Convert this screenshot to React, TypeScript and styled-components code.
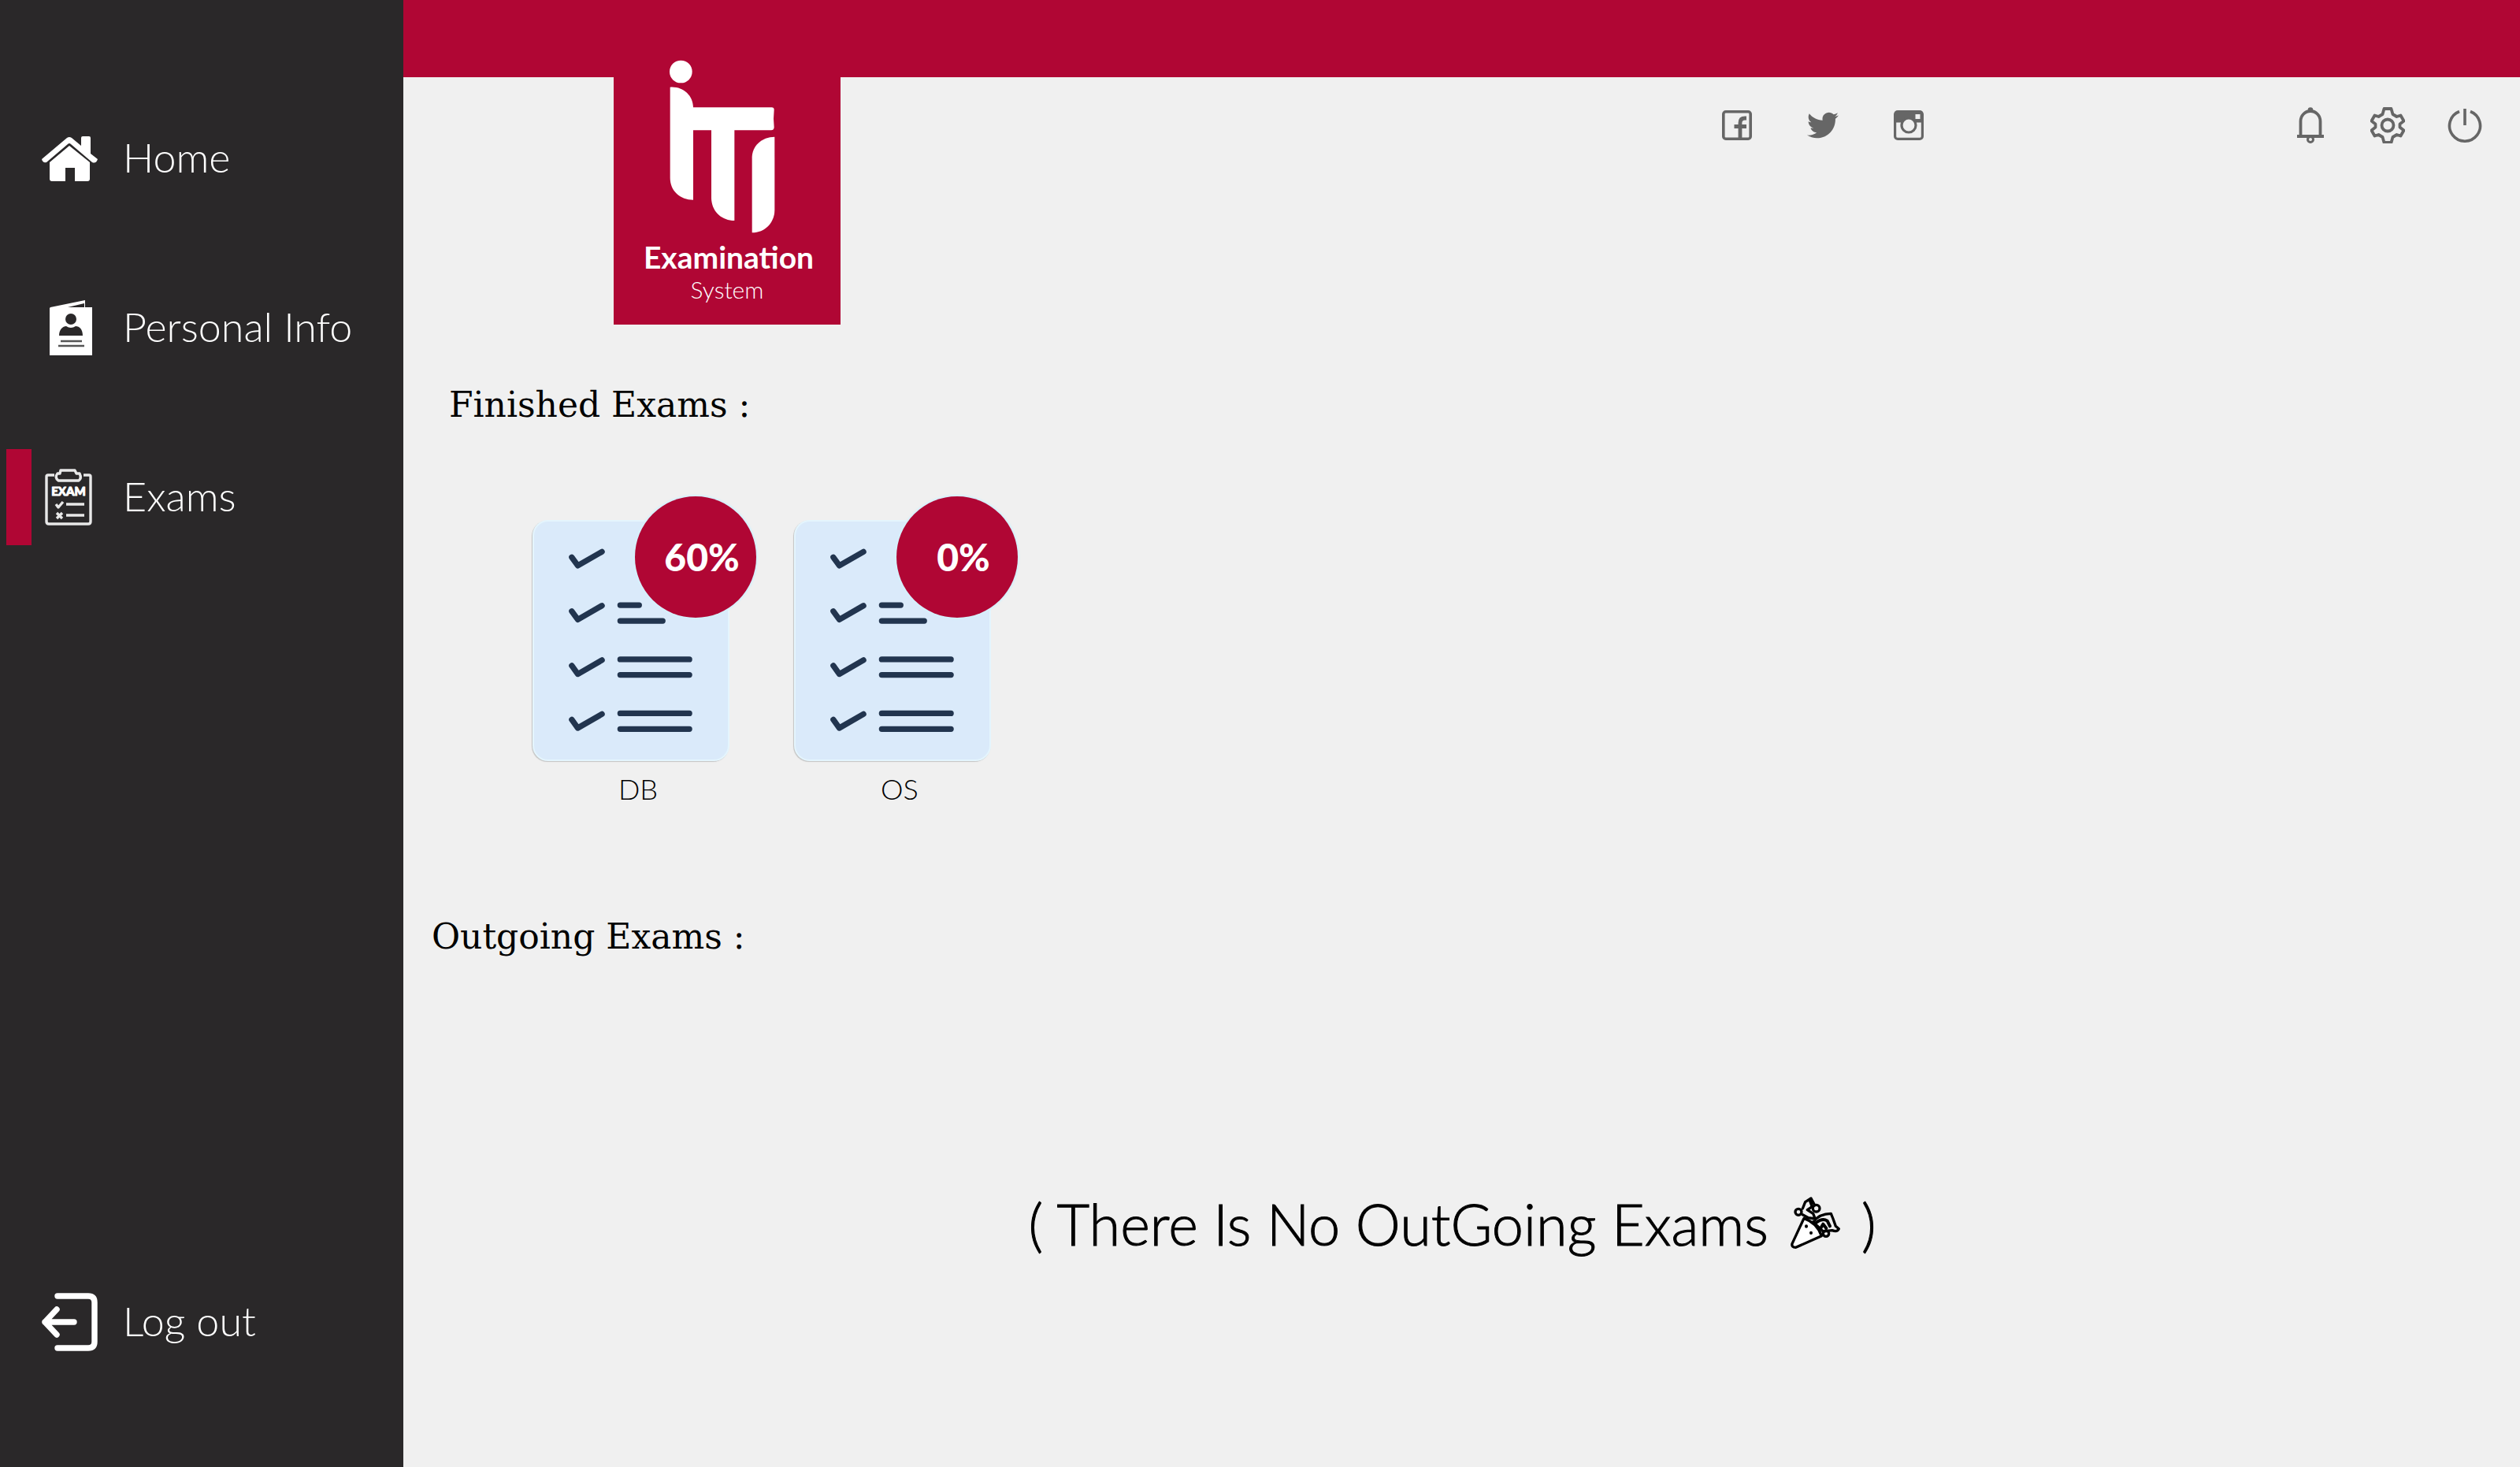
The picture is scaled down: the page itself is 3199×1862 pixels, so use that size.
import React from 'react';
import styled, { createGlobalStyle } from 'styled-components';
import { FaTwitter } from 'react-icons/fa';

const crimson = '#b00634';
const charcoal = '#2a2829';
const paper = '#f0f0f0';
const iconGrey = '#666666';

const GlobalStyle = createGlobalStyle`
  *, *::before, *::after { box-sizing: border-box; }
  body {
    margin: 0;
    background: ${paper};
    color: #000;
    font-family: 'Century Gothic', Lato, sans-serif;
    font-weight: 300;
  }
`;

const Page = styled.div`
  display: flex;
  min-height: 100vh;
`;

const Sidebar = styled.nav`
  display: flex;
  flex-direction: column;
  flex: 0 0 512px;
  padding: 140px 0 123px;
  background: ${charcoal};
`;

const NavList = styled.ul`
  display: flex;
  flex: 1;
  flex-direction: column;
  gap: 93px;
  margin: 0;
  padding: 0;
  list-style: none;
`;

const NavItem = styled.li<{ $last?: boolean }>`
  margin-top: ${(p) => (p.$last ? 'auto' : '0')};
`;

const NavLink = styled.a<{ $active?: boolean }>`
  display: flex;
  align-items: center;
  height: 122px;
  padding-left: 8px;
  color: #fff;
  font-size: 52px;
  line-height: 60px;
  text-decoration: none;
  white-space: nowrap;

  &::before {
    content: '';
    width: 32px;
    height: 100%;
    margin-right: 12px;
    background: ${(p) => (p.$active ? crimson : 'transparent')};
  }

  svg {
    width: 72px;
    height: 76px;
    margin-right: 32px;
  }
`;

const NavText = styled.span`
  padding-bottom: 4px;
`;

const Main = styled.main`
  flex: 1;
  min-width: 0;
`;

const TopBar = styled.div`
  height: 98px;
  background: ${crimson};
`;

const Header = styled.header`
  display: flex;
  align-items: flex-start;
  padding: 0 40px 0 267px;
`;

const Brand = styled.div`
  display: flex;
  flex-direction: column;
  align-items: center;
  width: 288px;
  margin-top: -24px;
  padding-bottom: 26px;
  background: ${crimson};
  color: #fff;

  svg {
    width: 136px;
    height: 224px;
    margin-right: 12px;
  }
`;

const BrandName = styled.strong`
  margin-top: 6px;
  padding-left: 4px;
  font-size: 39px;
  font-weight: 700;
  line-height: 44px;
`;

const BrandSub = styled.span`
  font-size: 30px;
  line-height: 38px;
`;

const IconGroup = styled.div<{ $gap: number; $push?: boolean }>`
  display: flex;
  gap: ${(p) => p.$gap}px;
  margin-top: 31px;
  margin-left: ${(p) => (p.$push ? 'auto' : '0')};

  & + & { margin-left: 450px; }
`;

const IconLink = styled.a`
  display: grid;
  place-items: center;
  width: 60px;
  height: 60px;
  color: ${iconGrey};

  svg { display: block; }
`;

const IconButton = styled(IconLink).attrs({ as: 'button', type: 'button' })`
  padding: 0;
  border: 0;
  background: none;
`;

const SectionTitle = styled.h2<{ $indent: number }>`
  margin: 0;
  padding-left: ${(p) => p.$indent}px;
  font-family: 'DejaVu Serif', serif;
  font-size: 44px;
  font-weight: 400;
  line-height: 60px;
`;

const Finished = styled.section`
  padding-top: 72px;
`;

const Outgoing = styled.section`
  padding-top: 136px;
`;

const ExamList = styled.ul`
  display: flex;
  flex-wrap: wrap;
  gap: 64px;
  margin: 0;
  padding: 116px 0 0 164px;
  list-style: none;
`;

const Exam = styled.li`
  position: relative;
  width: 268px;
  text-align: center;
`;

const Sheet = styled.div`
  width: 250px;
  height: 306px;
  border: 2px solid #e4f5fd;
  border-radius: 20px;
  background: #daeafa;
  box-shadow: -1px 1px 1px #c4c4c4;

  svg { display: block; width: 246px; height: 302px; }
`;

const Score = styled.strong`
  position: absolute;
  top: -30px;
  left: 130px;
  display: grid;
  place-items: center;
  width: 154px;
  height: 154px;
  padding-left: 16px;
  border-radius: 50%;
  background: ${crimson};
  box-shadow: 0 0 2px 2px #d5f0fb;
  color: #fff;
  font-size: 48px;
  font-weight: 900;
  line-height: 60px;
`;

const ExamName = styled.span`
  display: block;
  padding-top: 13px;
  font-size: 36px;
  line-height: 44px;
`;

const Empty = styled.p`
  display: flex;
  justify-content: center;
  align-items: center;
  gap: 26px;
  margin: 0;
  padding: 284px 24px 0 0;
  font-size: 72px;
  line-height: 100px;
  -webkit-text-stroke: 1px currentColor;
`;

const HomeIcon = () => (
  <svg viewBox="0 0 72 76" fill="#fff" aria-hidden="true">
    <path d="M1 39 33 12q3-2 6 0L51 22V12q0-2 2-2h8q2 0 2 2v20l9 7q-2 6-7 4L38 20q-2-2-4 0L7 43q-5 1-6-4Z" />
    <path d="M11 43 36 22 62 43v21q0 3-3 3H43V50H31v17H14q-3 0-3-3Z" />
  </svg>
);

const PersonalIcon = () => (
  <svg viewBox="0 0 72 76" aria-hidden="true">
    <path d="M12 12 56 3v9h9v61H11V13Z" fill="#fff" />
    <path d="m34 12 21-5v5Z" fill={charcoal} />
    <circle cx="38" cy="27" r="7" fill={charcoal} />
    <path d="M23 48c0-8 5-12 9-12q6 4 12 0c5 0 9 4 9 12Z" fill={charcoal} />
    <path d="M25 55h27M22 61h33" stroke="#555" strokeWidth="2.6" />
  </svg>
);

const ExamIcon = () => (
  <svg viewBox="0 0 72 76" fill="none" stroke="#e8e8e8" strokeWidth="3.4" strokeLinejoin="round" aria-hidden="true">
    <path d="M17 10H9q-2 0-2 2v57q0 3 3 3h50q3 0 3-3V12q0-2-2-2h-7" />
    <path d="M25 4h18l2 4h4q3 6-1 9H22q-5-4-1-9h3Z" />
    <path d="m19 47 3 4 6-7M20 58l7 7M27 58l-7 7M32 47h23M32 61h23" />
    <text x="35" y="36" textAnchor="middle" fill="#fff" stroke="#fff" strokeWidth="1" fontFamily="Lato, sans-serif" fontSize="15" fontWeight="900">EXAM</text>
  </svg>
);

const LogoutIcon = () => (
  <svg viewBox="0 0 72 76" fill="none" stroke="#fff" strokeWidth="7.4" strokeLinecap="round" strokeLinejoin="round" aria-hidden="true">
    <path d="M21 5h39q8 0 8 8v50q0 8-8 8H21" />
    <path d="M42 38H5M20 22 5 38l15 16" />
  </svg>
);

const LogoMark = () => (
  <svg viewBox="268 40 408 672" fill="#fff" role="img" aria-label="ITI">
    <circle cx="314" cy="91" r="43" />
    <path d="M273 150C320 146 361 180 361 227H660Q669 227 669 236L667 270 669 302Q669 314 658 314H518V658C468 658 430 622 430 570V314H361V579C312 579 273 545 273 495Z" />
    <path d="M671 339V618C671 665 634 704 585 704V418C585 374 622 339 671 339Z" />
  </svg>
);

const FacebookIcon = () => (
  <svg width="38" height="38" viewBox="0 0 38 38" fill="none" stroke="currentColor" strokeWidth="3.6">
    <rect x="1.8" y="1.8" width="34.4" height="34.4" rx="3" />
    <path d="M31 10h-2q-6 0-6 6V37M15.500 20.500H31" strokeWidth="4.800" />
  </svg>
);

const InstagramIcon = () => (
  <svg width="38" height="38" viewBox="0 0 38 38">
    <rect x="1.6" y="1.6" width="34.8" height="34.8" rx="3.5" fill="none" stroke="currentColor" strokeWidth="3.2" />
    <path fill="currentColor" d="M1 4q0-3 3-3h30q3 0 3 3v11.500H1Z" />
    <circle cx="19" cy="19" r="9" fill={paper} stroke="currentColor" strokeWidth="3.2" />
    <rect x="27.500" y="5" width="6" height="6" fill={paper} />
  </svg>
);

const BellIcon = () => (
  <svg width="36" height="46" viewBox="0 0 36 46" fill="none" stroke="currentColor" strokeWidth="3.8">
    <path d="M5.500 37V18a12.500 13 0 0 1 25 0v19M1 37h34" />
    <circle cx="18" cy="41" r="3.500" strokeWidth="3" />
    <circle cx="18" cy="3.500" r="1.800" strokeWidth="3" />
  </svg>
);

const GearIcon = () => (
  <svg width="44" height="46" viewBox="0 0 44 46" fill="none" stroke="currentColor" strokeWidth="3.8">
    <path d="M17.500 2h9l2 7 5 3 5-1.500 4 7-5 4v4l5 4-4 7-5-1.500-5 3-2 7h-9l-2-7-5-3-5 1.500-4-7 5-4v-4l-5-4 4-7 5 1.500 5-3Z" strokeLinejoin="round" />
    <circle cx="22" cy="23" r="7.500" />
  </svg>
);

const PowerIcon = () => (
  <svg width="44" height="44" viewBox="0 0 44 44" fill="none" stroke="currentColor" strokeWidth="3.6">
    <path d="M15 4.500a19.500 19.500 0 1 0 14 0M22 1v21" />
  </svg>
);

const Checklist = () => (
  <svg viewBox="114 185 740 906" fill="none" stroke="#22354f" strokeWidth="22" strokeLinecap="round" strokeLinejoin="round" aria-hidden="true">
    {[0, 206, 414, 620].map((dy) => (
      <path key={dy} d={`M258 ${320 + dy}l23 32 92-53`} />
    ))}
    <path d="M443 503h72M443 563h162M443 710h264M443 769h264M443 916h264M443 976h264" />
  </svg>
);

const PartyIcon = () => (
  <svg width="66" height="68" viewBox="0 0 198 204" fill="none" stroke="#000" strokeWidth="10" strokeLinejoin="round" strokeLinecap="round" role="img" aria-label="Party popper">
    <path d="M57 82 12 179q-3 14 14 14l98-44Q107 99 57 82Z" fill="#fff" />
    <circle cx="36" cy="58" r="12" />
    <circle cx="104" cy="44" r="13" />
    <circle cx="141" cy="140" r="11" />
    <path d="M52 45 62 20 84 6l14 26M52 68l22 12 26 4-8-20-22-14 18-12-8-22M92 96q24-32 68-32l8 20 10 28 12 10q-6 14-26 6l-34 4Z" />
    <path d="M104 98q24-18 42-6l10 20M122 118l8-14 12 16" strokeWidth="12" />
    <path d="M66 112v1M84 137v1" strokeWidth="12" />
  </svg>
);

const exams = [
  { name: 'DB', score: '60%' },
  { name: 'OS', score: '0%' },
];

export default function App() {
  return (
    <>
      <GlobalStyle />
      <Page>
        <Sidebar aria-label="Main">
          <NavList>
            <NavItem><NavLink href="#home"><HomeIcon /><NavText>Home</NavText></NavLink></NavItem>
            <NavItem><NavLink href="#personal"><PersonalIcon /><NavText>Personal Info</NavText></NavLink></NavItem>
            <NavItem><NavLink href="#exams" $active aria-current="page"><ExamIcon /><NavText>Exams</NavText></NavLink></NavItem>
            <NavItem $last><NavLink href="#logout"><LogoutIcon /><NavText>Log out</NavText></NavLink></NavItem>
          </NavList>
        </Sidebar>
        <Main>
          <TopBar />
          <Header>
            <Brand>
              <LogoMark />
              <BrandName>Examination</BrandName>
              <BrandSub>System</BrandSub>
            </Brand>
            <IconGroup $gap={49} $push>
              <IconLink href="#facebook" aria-label="Facebook"><FacebookIcon /></IconLink>
              <IconLink href="#twitter" aria-label="Twitter"><FaTwitter size={40} /></IconLink>
              <IconLink href="#instagram" aria-label="Instagram"><InstagramIcon /></IconLink>
            </IconGroup>
            <IconGroup $gap={38}>
              <IconButton aria-label="Notifications"><BellIcon /></IconButton>
              <IconButton aria-label="Settings"><GearIcon /></IconButton>
              <IconButton aria-label="Power"><PowerIcon /></IconButton>
            </IconGroup>
          </Header>
          <Finished>
            <SectionTitle $indent={58}>Finished Exams :</SectionTitle>
            <ExamList>
              {exams.map((exam) => (
                <Exam key={exam.name}>
                  <Sheet><Checklist /></Sheet>
                  <Score>{exam.score}</Score>
                  <ExamName>{exam.name}</ExamName>
                </Exam>
              ))}
            </ExamList>
          </Finished>
          <Outgoing>
            <SectionTitle $indent={36}>Outgoing Exams :</SectionTitle>
            <Empty>
              <span>( There Is No OutGoing Exams</span>
              <PartyIcon />
              <span>)</span>
            </Empty>
          </Outgoing>
        </Main>
      </Page>
    </>
  );
}
